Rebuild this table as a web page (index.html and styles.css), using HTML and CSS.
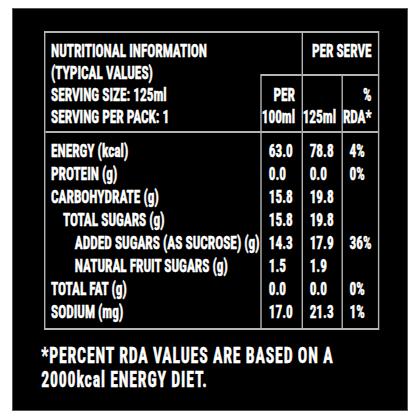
FILE: index.html
```html
<!DOCTYPE html>
<html lang="en">
<head>
    <meta charset="UTF-8">
    <meta name="viewport" content="width=device-width, initial-scale=1.0">
    <title>Nutritional Information</title>
    <link rel="stylesheet" href="styles.css">
</head>
<body>
    <div class="panel">
        <div class="condensed">
            <div class="facts">
                <div class="head-title">
                    NUTRITIONAL INFORMATION<br>
                    (TYPICAL VALUES)<br>
                    SERVING SIZE: 125ml<br>
                    SERVING PER PACK: 1
                </div>
                <div class="head-gap"></div>
                <div class="head-serve">PER SERVE</div>
                <div class="head-col">PER<br>100ml</div>
                <div class="head-col">125ml</div>
                <div class="head-col">%<br>RDA*</div>

                <div class="name first">ENERGY (kcal)</div>
                <div class="val first">63.0</div>
                <div class="val first">78.8</div>
                <div class="val first">4%</div>

                <div class="name">PROTEIN (g)</div>
                <div class="val">0.0</div>
                <div class="val">0.0</div>
                <div class="val">0%</div>

                <div class="name">CARBOHYDRATE (g)</div>
                <div class="val">15.8</div>
                <div class="val">19.8</div>
                <div class="val"></div>

                <div class="name sub">TOTAL SUGARS (g)</div>
                <div class="val">15.8</div>
                <div class="val">19.8</div>
                <div class="val"></div>

                <div class="name subsub">ADDED SUGARS (AS SUCROSE) (g)</div>
                <div class="val">14.3</div>
                <div class="val">17.9</div>
                <div class="val">36%</div>

                <div class="name subsub">NATURAL FRUIT SUGARS (g)</div>
                <div class="val">1.5</div>
                <div class="val">1.9</div>
                <div class="val"></div>

                <div class="name">TOTAL FAT (g)</div>
                <div class="val">0.0</div>
                <div class="val">0.0</div>
                <div class="val">0%</div>

                <div class="name last">SODIUM (mg)</div>
                <div class="val last">17.0</div>
                <div class="val last">21.3</div>
                <div class="val last">1%</div>
            </div>

            <p class="note">*PERCENT RDA VALUES ARE BASED ON A<br>2000kcal ENERGY DIET.</p>
        </div>
    </div>
</body>
</html>
```
FILE: styles.css
```css
* {
    box-sizing: border-box;
}

body {
    margin: 0;
    padding: 8px 12px;
    background: #fff;
    font-family: "Roboto Condensed", "Liberation Sans", sans-serif;
    font-weight: bold;
    color: #fff;
    -webkit-text-stroke: 0.5px #fff;
}

.panel {
    width: 396px;
    height: 403px;
    background: #000;
    border: 1px solid #555;
    padding: 22px 0 0 31px;
    overflow: hidden;
}

/* the label face is much narrower than any installed font */
.condensed {
    width: 479px;
    transform: scaleX(0.7);
    transform-origin: left top;
}

.facts {
    display: grid;
    grid-template-columns: 307px 58.5px 57px 1fr;
    border: 2px solid #b4b4b4;
    font-size: 19px;
    line-height: 22px;
}

.head-title {
    grid-row: 1 / 3;
    padding: 7px 0 3px 8px;
    border-bottom: 2px solid #b4b4b4;
}

.head-gap {
    border-bottom: 2px solid #b4b4b4;
}

.head-serve {
    grid-column: 3 / 5;
    text-align: right;
    padding: 7px 9px 3px 0;
    border-left: 2px solid #b4b4b4;
    border-bottom: 2px solid #b4b4b4;
}

.head-col {
    display: flex;
    flex-direction: column;
    justify-content: flex-end;
    text-align: right;
    padding: 0 9px 3px 0;
    border-left: 2px solid #b4b4b4;
    border-bottom: 2px solid #b4b4b4;
}

.name,
.val {
    line-height: 23px;
    white-space: nowrap;
}

.name {
    padding-left: 8px;
}

.name.sub {
    padding-left: 25px;
}

.name.subsub {
    padding-left: 42px;
}

.val {
    padding-left: 10px;
    border-left: 2px solid #b4b4b4;
}

.first {
    padding-top: 6px;
}

.last {
    padding-bottom: 5px;
}

.note {
    margin: 13px 0 0 -4px;
    font-size: 22.5px;
    line-height: 24px;
    letter-spacing: 1.2px;
}
```
